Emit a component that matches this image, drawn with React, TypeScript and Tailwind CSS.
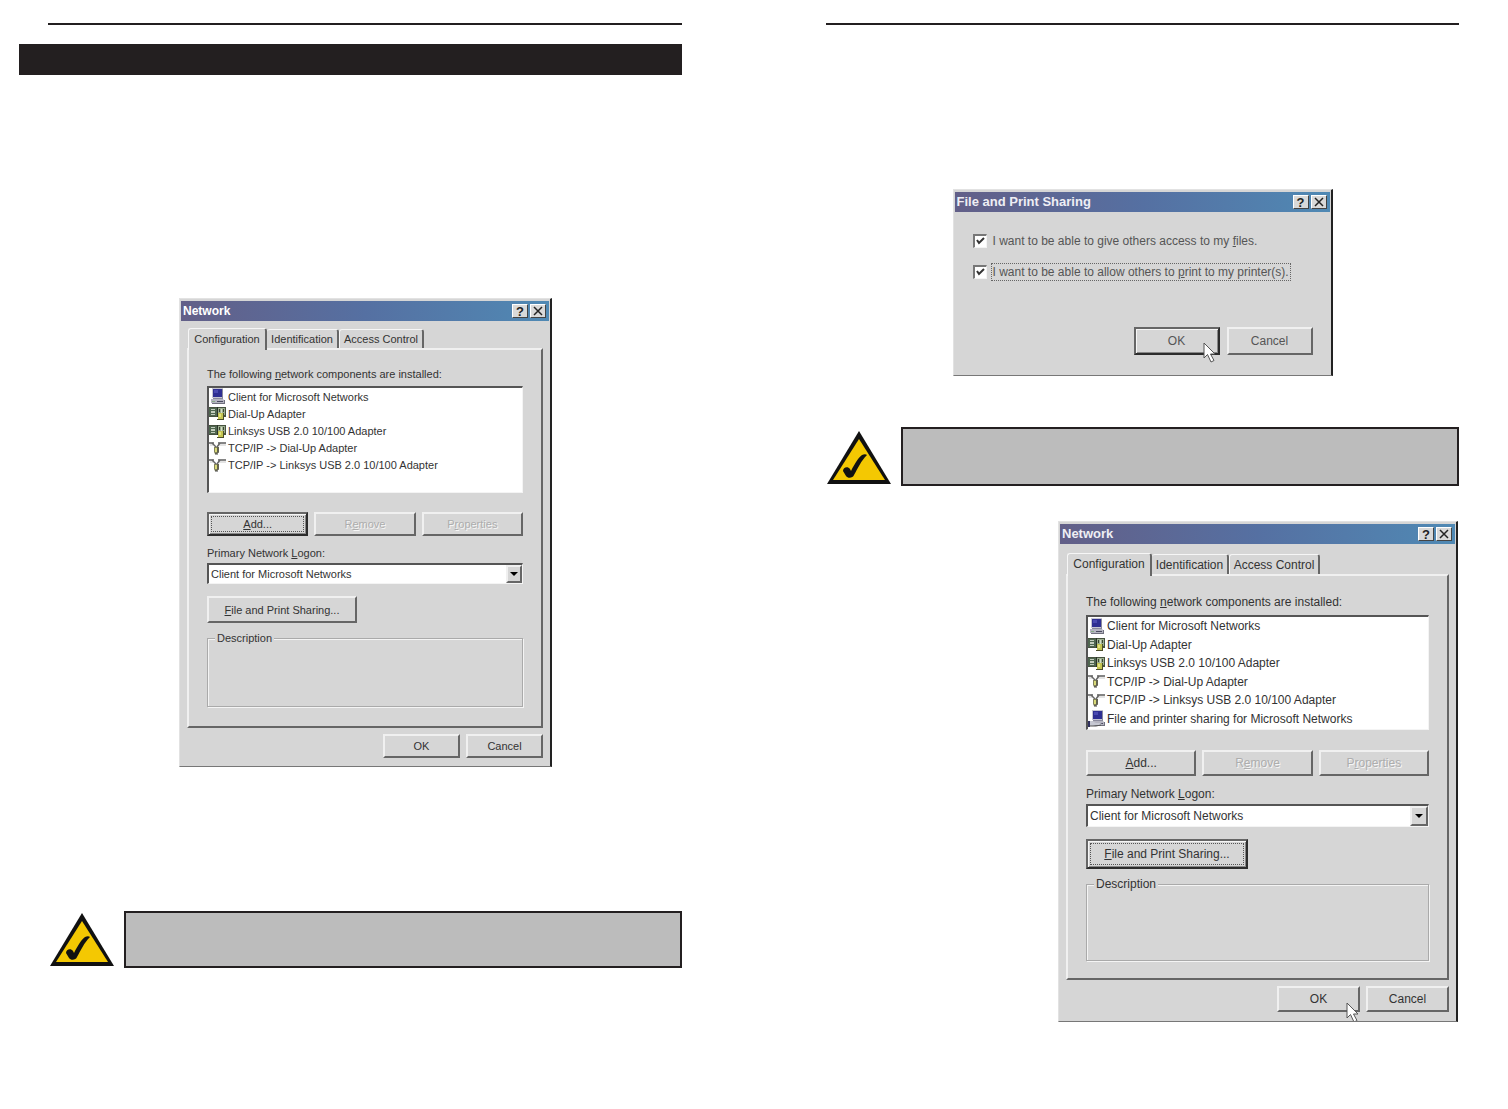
import type { ReactNode } from "react";

type Size = "sm" | "lg";
type IconName = "client" | "adapter" | "protocol" | "service";

const raised =
  "border-2 border-t-[#f0f0f0] border-l-[#f0f0f0] border-b-[#666] border-r-[#666] bg-[#d6d6d6]";
const raisedDefault =
  "border-2 border-t-[#666] border-l-[#666] border-b-[#2c2c2c] border-r-[#2c2c2c] bg-[#d6d6d6] shadow-[inset_1px_1px_0_#f6f6f6,inset_-1px_-1px_0_#888]";
const sunken =
  "border-t-2 border-l-2 border-b border-r border-t-[#555] border-l-[#555] border-b-[#f4f4f4] border-r-[#f4f4f4] bg-white";

function ComputerShape() {
  return (
    <>
      <path d="M3 0h11v10H3z" fill="#c6c6d2" />
      <path d="M13 1h1v10H4v-1h9z" fill="#8a8a9c" />
      <path d="M4 1h9v8H4z" fill="#2f2f92" />
      <path d="M5 2h4v3H5z" fill="#4a4ab0" />
      <path d="M2 11h12l2 2v2H2z" fill="#b4b4c0" />
      <path d="M3 15h13v1H3zM15 12h1v3h-1z" fill="#70707e" />
      <path d="M8 13h6v1H8z" fill="#4a4a60" />
      <path d="M3 13h3v1H3z" fill="#86a886" />
    </>
  );
}

function ComponentIcon({ name }: { name: IconName }) {
  return (
    <svg viewBox="0 0 17 17" className="size-[17px] shrink-0" aria-hidden="true">
      {name === "client" && <ComputerShape />}
      {name === "adapter" && (
        <>
          <path d="M0 2h17v10H0z" fill="#46523f" />
          <path d="M0 3h8v8H0z" fill="#4f6650" />
          <path d="M2 4h4v1H2zM2 6h4v2H2zM2 9h4v1H2z" fill="#c3cdbd" />
          <path d="M9 3h7v7H9z" fill="#9cae90" />
          <path d="M8 2h1v10H8z" fill="#2b332a" />
          <path d="M10 4h1v3h-1zM14 4h1v3h-1z" fill="#39452f" />
          <path d="M12 4h1v4h-1z" fill="#d5ddc9" />
          <path d="M9 8h5v6H9z" fill="#c4c552" />
          <path d="M10 9h2v3h-2z" fill="#e3e282" />
          <path d="M14 8h1v6h-1zM8 14h7v1H8z" fill="#4b4d2a" />
        </>
      )}
      {name === "protocol" && (
        <>
          <path d="M0 3h5M9 3h8" stroke="#858585" strokeWidth="2" />
          <path d="M1 5h3M10 5h7" stroke="#c8c8c8" />
          <path d="M3 3l4 4M11 3L8 7" stroke="#666" strokeWidth="1.500" fill="none" />
          <path d="M5 7h5v5l-2 2H6l-1-2z" fill="#82825a" />
          <path d="M6 8h2v4H6z" fill="#d9da78" />
          <path d="M9 7v6M6 14h3" stroke="#444" />
        </>
      )}
      {name === "service" && (
        <>
          <g transform="translate(1 0)">
            <ComputerShape />
          </g>
          <path d="M0 11h4l4 2h4l2 1-2 1H8l-3 1H0z" fill="#c6c8d2" />
          <path d="M0 11h2v6H0z" fill="#30305e" />
          <path d="M2 16h6l5-1" stroke="#555" fill="none" />
        </>
      )}
    </svg>
  );
}

function Pointer({ className }: { className: string }) {
  return (
    <svg viewBox="0 0 14 22" className={`pointer-events-none absolute h-[22px] w-[14px] ${className}`} aria-hidden="true">
      <path d="M1 1v15l3.5-3.5L8 20l3-1.500L7.500 12H12z" fill="#fff" stroke="#555" />
    </svg>
  );
}

function TitleBar({ title, large }: { title: string; large?: boolean }) {
  return (
    <div className="flex h-5 items-center justify-between bg-linear-to-r from-[#625f88] via-[#5570a2] to-[#4f89b4] pr-[3px] pl-[2px] text-white">
      <h2 className={large ? "text-[13px] leading-4 font-bold text-[#eeeef4]" : "text-xs leading-4 font-bold"}>{title}</h2>
      <div className="flex gap-[2px]">
        <button
          aria-label="Help"
          className="flex h-[14px] w-4 items-center justify-center border border-t-white border-l-white border-r-[#444] border-b-[#444] bg-[#d9d9d9] text-[13px] leading-none font-bold text-[#222]"
        >
          ?
        </button>
        <button
          aria-label="Close"
          className="flex h-[14px] w-4 items-center justify-center border border-t-white border-l-white border-r-[#444] border-b-[#444] bg-[#d9d9d9] text-[#222]"
        >
          <svg viewBox="0 0 10 10" className="size-[10px]" aria-hidden="true">
            <path d="M1 1l8 8M9 1L1 9" stroke="currentColor" strokeWidth="1.500" />
          </svg>
        </button>
      </div>
    </div>
  );
}

function Frame({ label, className, children }: { label: string; className: string; children: ReactNode }) {
  return (
    <section
      role="dialog"
      aria-label={label}
      className={`relative flex flex-col border-t border-r-2 border-b border-l border-t-[#e2e2e2] border-r-[#222] border-b-[#777] border-l-[#e2e2e2] bg-[#d6d6d6] pt-[2px] pr-px pb-px pl-px text-[#333] ${className}`}
    >
      {children}
    </section>
  );
}

const sizes = {
  sm: {
    frame: "h-[469px] w-[373px] text-[11px] leading-4",
    tabs: "mt-[7px] pl-[7px]",
    tabOn: "h-[22px] w-[79px]",
    tab: "h-[19px] w-[72px]",
    tabLast: "h-[19px] w-[85px]",
    panel: "mx-[6px] h-[380px] px-[18px] pt-4",
    list: "mt-1 h-[107px]",
    rows: "h-[86px]",
    buttons: "mt-[19px] gap-[6px]",
    button: "h-6",
    logon: "mt-[9px]",
    select: "mt-[2px] h-[21px]",
    arrow: "w-4",
    share: "mt-3 h-[27px] w-[150px]",
    group: "mt-[7px] h-[77px]",
    footer: "mt-[6px] mr-[6px] gap-[6px]",
    foot: "h-6 w-[77px]",
  },
  lg: {
    frame: "h-[501px] w-[400px] text-xs leading-4",
    tabs: "mt-[9px] pl-[7px]",
    tabOn: "h-[23px] w-[85px]",
    tab: "h-5 w-[77px]",
    tabLast: "h-5 w-[91px]",
    panel: "mx-[6px] h-[406px] px-[18px] pt-[18px]",
    list: "mt-[5px] h-[115px]",
    rows: "h-[111px]",
    buttons: "mt-5 gap-[6px]",
    button: "h-[26px]",
    logon: "mt-[10px]",
    select: "mt-[2px] h-[23px]",
    arrow: "w-[18px]",
    share: "mt-3 h-[30px] w-[162px]",
    group: "mt-[7px] h-[85px]",
    footer: "mt-[6px] mr-[6px] gap-[6px]",
    foot: "h-[26px] w-[83px]",
  },
};

const components: { icon: IconName; name: string }[] = [
  { icon: "client", name: "Client for Microsoft Networks" },
  { icon: "adapter", name: "Dial-Up Adapter" },
  { icon: "adapter", name: "Linksys USB 2.0 10/100 Adapter" },
  { icon: "protocol", name: "TCP/IP -> Dial-Up Adapter" },
  { icon: "protocol", name: "TCP/IP -> Linksys USB 2.0 10/100 Adapter" },
];
const sharing: { icon: IconName; name: string } = {
  icon: "service",
  name: "File and printer sharing for Microsoft Networks",
};

function NetworkDialog({ size, focus, id, withSharing, children }: {
  size: Size;
  focus: "add" | "share";
  id: string;
  withSharing?: boolean;
  children?: ReactNode;
}) {
  const s = sizes[size];
  const items = withSharing ? [...components, sharing] : components;
  const tab = "border-t border-l border-r-2 border-t-[#f6f6f6] border-l-[#f6f6f6] border-r-[#666] rounded-t-[3px] whitespace-nowrap";
  const disabled = "text-[#adadad] [text-shadow:1px_1px_0_#f6f6f6]";
  const dotted = "flex size-full items-center justify-center outline-1 outline-dotted outline-[#555] -outline-offset-3";
  return (
    <Frame label="Network" className={s.frame}>
      <TitleBar title="Network" large={size === "lg"} />
      <div role="tablist" className={`relative z-10 flex items-end ${s.tabs}`}>
        <button role="tab" aria-selected="true" className={`-mb-[2px] bg-[#d6d6d6] pb-[2px] ${tab} ${s.tabOn}`}>Configuration</button>
        <button role="tab" aria-selected="false" className={`border-l-0 ${tab} ${s.tab}`}>Identification</button>
        <button role="tab" aria-selected="false" className={`${tab} ${s.tabLast}`}>Access Control</button>
      </div>
      <div role="tabpanel" className={`flex flex-col ${raised} ${s.panel}`}>
        <div id={`${id}-list`}>The following <u>n</u>etwork components are installed:</div>
        <div className={`${sunken} ${s.list}`}>
          <ul aria-labelledby={`${id}-list`} className={`flex flex-col ${s.rows}`}>
            {items.map((c) => (
              <li key={c.name} className="flex flex-1 items-center gap-[2px] whitespace-nowrap">
                <ComponentIcon name={c.icon} />
                {c.name}
              </li>
            ))}
          </ul>
        </div>
        <div className={`grid grid-cols-3 ${s.buttons}`}>
          <button className={`${s.button} ${focus === "add" ? raisedDefault : raised}`}>
            <span className={focus === "add" ? dotted : ""}><span><u>A</u>dd...</span></span>
          </button>
          <button disabled className={`${raised} ${s.button} ${disabled}`}>R<u>e</u>move</button>
          <button disabled className={`${raised} ${s.button} ${disabled}`}>P<u>r</u>operties</button>
        </div>
        <label htmlFor={`${id}-logon`} className={s.logon}>Primary Network <u>L</u>ogon:</label>
        <div className={`flex ${sunken} ${s.select}`}>
          <div className="relative flex flex-1">
            <select id={`${id}-logon`} className="w-full appearance-none bg-white pl-[2px]">
              <option>Client for Microsoft Networks</option>
            </select>
            <span className={`pointer-events-none absolute inset-y-0 right-0 flex items-center justify-center ${raised} ${s.arrow}`}>
              <svg viewBox="0 0 8 4" className="h-1 w-2" aria-hidden="true">
                <path d="M0 0h8L4 4z" fill="#000" />
              </svg>
            </span>
          </div>
        </div>
        <button className={`${s.share} ${focus === "share" ? raisedDefault : raised}`}>
          <span className={focus === "share" ? dotted : ""}><span><u>F</u>ile and Print Sharing...</span></span>
        </button>
        <fieldset className={`border border-[#aaa] shadow-[1px_1px_0_#f4f4f4,inset_1px_1px_0_#f4f4f4] ${s.group}`}>
          <legend className="ml-[7px] bg-[#d6d6d6] px-[2px]">Description</legend>
        </fieldset>
      </div>
      <div className={`flex justify-end ${s.footer}`}>
        <button className={`${raised} ${s.foot}`}>OK</button>
        <button className={`${raised} ${s.foot}`}>Cancel</button>
      </div>
      {children}
    </Frame>
  );
}

function Check({ id, children, focused }: { id: string; children: ReactNode; focused?: boolean }) {
  return (
    <div className="flex items-center gap-[4px]">
      <span className="relative flex size-[14px]">
        <input
          id={id}
          type="checkbox"
          defaultChecked
          className="peer size-[14px] appearance-none border-t-2 border-r border-b border-l-2 border-t-[#777] border-r-[#f4f4f4] border-b-[#f4f4f4] border-l-[#777] bg-white"
        />
        <svg viewBox="0 0 14 14" className="pointer-events-none absolute inset-0 hidden peer-checked:block" aria-hidden="true">
          <path d="M4 6l2 3 5-5" fill="none" stroke="#333" strokeWidth="2" />
        </svg>
      </span>
      <label htmlFor={id} className={`border border-dotted px-px whitespace-nowrap ${focused ? "border-[#666]" : "border-transparent"}`}>
        {children}
      </label>
    </div>
  );
}

function SharingDialog() {
  return (
    <Frame label="File and Print Sharing" className="h-[187px] w-[380px] text-xs leading-4">
      <TitleBar title="File and Print Sharing" large />
      <div className="mt-5 ml-[18px] flex flex-col gap-[13px] text-[#555]">
        <Check id="share-files">I want to be able to give others access to my <u>f</u>iles.</Check>
        <Check id="share-printer" focused>I want to be able to allow others to <u>p</u>rint to my printer(s).</Check>
      </div>
      <div className="mt-auto mr-[17px] mb-[19px] flex justify-end gap-[7px] text-[#555]">
        <button className={`h-7 w-[86px] ${raisedDefault}`}>OK</button>
        <button className={`h-7 w-[86px] ${raised}`}>Cancel</button>
      </div>
      <Pointer className="top-[152px] left-[249px]" />
    </Frame>
  );
}

function Note({ className }: { className: string }) {
  return (
    <aside className={`flex items-end gap-[9px] ${className}`}>
      <svg viewBox="0 0 66 56" className="h-14 w-[66px] shrink-0" role="img" aria-label="Note">
        <path d="M33 1L65 54H1z" fill="#111" />
        <path d="M33 9L59 50H7z" fill="#f4c802" />
        <path d="M17 41c0-4 5-5 7-2l1 2c4-8 8-14 11-16 2-1 4-1 5 0-6 6-9 13-13 20-1 3-6 4-8 1-1-2-2-3-3-5z" fill="#111" />
      </svg>
      <div className="h-full flex-1 border-2 border-[#231f20] bg-[#bcbcbc]" />
    </aside>
  );
}

export default function App() {
  return (
    <main className="grid min-h-screen grid-cols-2 bg-white pt-[23px] font-['Liberation_Sans',Arial,sans-serif]">
      <article className="flex flex-col pr-[72px] pl-[19px]">
        <div className="ml-[29px] h-[2px] bg-[#231f20]" />
        <div className="mt-[19px] h-[31px] bg-[#231f20]" />
        <div className="mt-[223px] ml-40">
          <NetworkDialog id="before" size="sm" focus="add" />
        </div>
        <Note className="mt-36 ml-[30px] h-[57px]" />
      </article>
      <article className="flex flex-col pr-[49px] pl-[72px]">
        <div className="h-[2px] bg-[#231f20]" />
        <div className="mt-[164px] flex justify-center">
          <SharingDialog />
        </div>
        <Note className="mt-[51px] h-[59px]" />
        <div className="mt-[35px] mr-px flex justify-end">
          <NetworkDialog id="after" size="lg" focus="share" withSharing>
            <div className="pointer-events-none absolute inset-0 overflow-hidden">
              <Pointer className="top-[480px] left-[287px]" />
            </div>
          </NetworkDialog>
        </div>
      </article>
    </main>
  );
}
